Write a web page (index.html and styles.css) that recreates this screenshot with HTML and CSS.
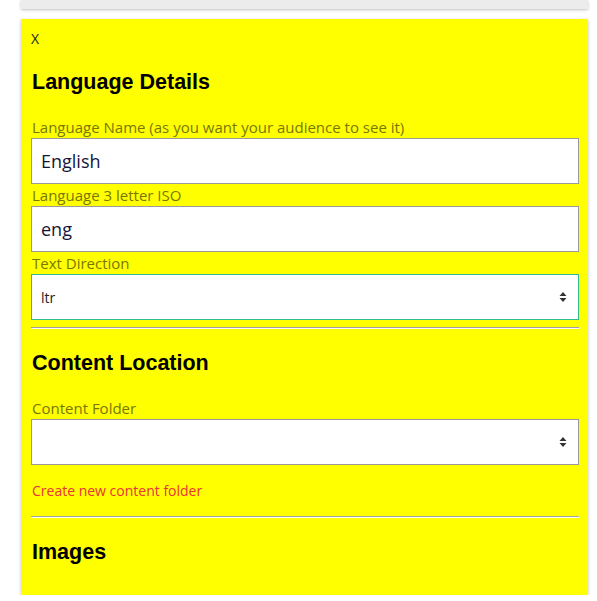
FILE: index.html
```html
<!DOCTYPE html>
<html>
<head>
<meta charset="utf-8">
<link rel="stylesheet" href="styles.css">
</head>
<body>
<div class="wrap">
  <div class="card card-prev"></div>
  <div class="card card-main">
    <div class="close">X</div>
    <h2 class="heading">Language Details</h2>
    <label class="lbl">Language Name (as you want your audience to see it)</label>
    <input class="field" type="text" value="English">
    <label class="lbl">Language 3 letter ISO</label>
    <input class="field" type="text" value="eng">
    <label class="lbl">Text Direction</label>
    <div class="select-wrap">
      <select class="field select focused"><option>ltr</option></select>
      <svg class="arrows" width="8" height="12" viewBox="0 0 8 12"><path d="M4 1 L7.5 5 L0.5 5 Z M0.5 7 L7.5 7 L4 11 Z" fill="#333"/></svg>
    </div>
    <hr class="rule">
    <h2 class="heading">Content Location</h2>
    <label class="lbl">Content Folder</label>
    <div class="select-wrap">
      <select class="field select"><option></option></select>
      <svg class="arrows" width="8" height="12" viewBox="0 0 8 12"><path d="M4 1 L7.5 5 L0.5 5 Z M0.5 7 L7.5 7 L4 11 Z" fill="#333"/></svg>
    </div>
    <a class="link">Create new content folder</a>
    <hr class="rule rule2">
    <h2 class="heading heading-last">Images</h2>
  </div>
</div>
</body>
</html>
```
FILE: styles.css
```css
html, body {
  margin: 0;
  padding: 0;
  background: #fff;
}
body {
  font-family: "Open Sans", sans-serif;
}
.wrap {
  margin-left: 21px;
  width: 567px;
  display: flex;
  flex-direction: column;
  gap: 10px;
}
.card {
  box-shadow: 0 1px 3px rgba(0, 0, 0, 0.25);
}
.card-prev {
  height: 9px;
  background: #ececec;
}
.card-main {
  background: #ffff00;
  padding: 10px 9px 30px 10px;
  display: flex;
  flex-direction: column;
}
.close {
  font-size: 14px;
  line-height: 20px;
  color: #222;
}
.heading {
  font-family: "Liberation Sans", Arial, sans-serif;
  font-weight: bold;
  font-size: 21.5px;
  line-height: 25px;
  margin: 21px 0 21px 1px;
  color: #000;
}
.lbl {
  display: block;
  font-size: 15px;
  line-height: 22px;
  color: #787800;
  margin-left: 1px;
}
.field {
  box-sizing: border-box;
  width: 548px;
  height: 46px;
  margin: 0;
  border: 1px solid #9a9a9a;
  background: #fff;
  font-family: "Open Sans", sans-serif;
  font-size: 18px;
  color: #141438;
  padding: 0 9px;
  outline: none;
  border-radius: 0;
}
.select-wrap {
  position: relative;
  width: 548px;
  height: 46px;
}
.select {
  appearance: none;
  -webkit-appearance: none;
  font-size: 14px;
  color: #222;
  padding: 0 9px;
}
.focused {
  border-color: #2dbd8e;
}
.arrows {
  position: absolute;
  right: 12px;
  top: 17px;
}
.rule {
  width: 548px;
  margin: 7px 0 0 0;
  border: 0;
  border-top: 1px solid #a0a0a0;
  border-bottom: 1px solid #fff;
  height: 0;
}
.rule + .heading {
  margin-top: 22px;
}
.link {
  font-size: 14px;
  line-height: 22px;
  color: #e8333a;
  margin: 15px 0 0 1px;
}
.rule2 {
  margin-top: 14px;
}
.heading-last {
  margin-top: 18px;
  margin-bottom: 0;
}
```
